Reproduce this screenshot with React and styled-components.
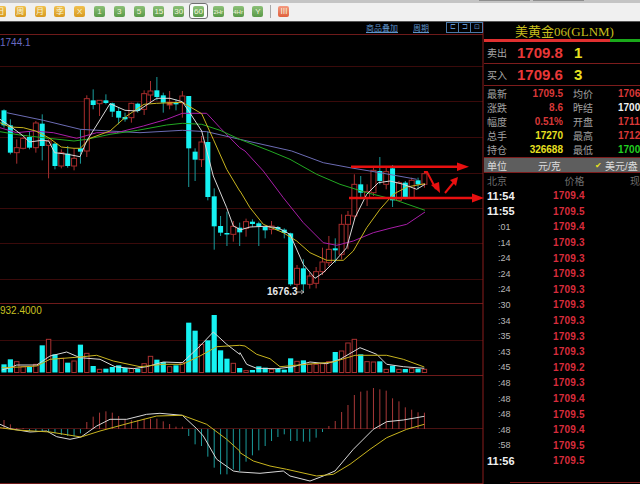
import React from "react";
import styled, { createGlobalStyle } from "styled-components";

const GlobalStyle = createGlobalStyle`
  html, body {
    margin: 0;
    padding: 0;
    background: #000;
    overflow: hidden;
  }
`;

const CN = `"Liberation Sans", "Noto Sans CJK SC", sans-serif`;

const Page = styled.div`
  width: 640px;
  height: 484px;
  display: flex;
  flex-direction: column;
  overflow: hidden;
  font-family: ${CN};
`;

const TopStrip = styled.div`
  height: 3px;
  background: #c4c4c4;
  display: flex;
  gap: 3px;
  padding-left: 479px;
`;

const StripTab = styled.div`
  width: 51px;
  height: 1px;
  background: #8e8e8e;
`;

const Toolbar = styled.div`
  height: 17px;
  background: #f0f0f0;
  border-bottom: 1px solid #555;
  display: flex;
  align-items: center;
  padding: 0 0 1px 0;
  margin-left: -5px;
  gap: 8.8px;
  isolation: isolate;
`;

const ToolIcon = styled.div`
  position: relative;
  width: 11px;
  height: 11px;
  border-radius: 2px;
  flex: none;
  display: flex;
  align-items: center;
  justify-content: center;
  font-size: ${(p) => (p.$small ? 6 : 8)}px;
  line-height: 1;
  white-space: nowrap;
  color: #f4f4d8;
  background: ${(p) =>
    p.$tone === "orange"
      ? "linear-gradient(#f0c050, #d89a20)"
      : p.$tone === "red"
      ? "linear-gradient(#f49a80, #e0603c)"
      : "linear-gradient(#8cc078, #5a9a48)"};
  ${(p) =>
    p.$active &&
    `&::before {
      content: "";
      position: absolute;
      inset: -3px -4px -2px -4px;
      background: #fbfbfb;
      border: 1px solid #707070;
      border-radius: 3px;
      z-index: -1;
    }`}
`;

const ToolSep = styled.div`
  width: 1px;
  height: 13px;
  background: #a8a8a8;
  flex: none;
  margin: 0 -1.5px 0 -2px;
`;

const Main = styled.div`
  flex: 1;
  display: flex;
  min-height: 0;
`;

const ChartPane = styled.div`
  position: relative;
  width: 484px;
  flex: none;
  background: #000;
`;

const ChartSvg = styled.svg`
  display: block;
`;

const ChartLinks = styled.div`
  position: absolute;
  top: 0;
  right: 1px;
  height: 11px;
  display: flex;
  align-items: center;
  font-size: 8px;
  color: #5f93c8;
`;

const ChartLink = styled.span`
  text-decoration: underline;
  margin-right: ${(p) => p.$gap}px;
`;

const PagerBox = styled.span`
  width: 11px;
  height: 9px;
  border: 1px solid #4a78a8;
  margin-left: -1px;
  font-size: 7px;
  line-height: 8px;
  text-align: center;
`;

const Side = styled.div`
  flex: 1;
  min-width: 0;
  background: #000;
  display: flex;
  flex-direction: column;
  overflow: hidden;
`;

const Title = styled.div`
  height: 17px;
  display: flex;
  align-items: center;
  padding-left: 31px;
  font-family: "Liberation Serif", "Noto Sans CJK SC", serif;
  font-size: 13px;
  color: #c6bd1e;
  white-space: nowrap;
`;

const Meter = styled.div`
  height: 3px;
  display: flex;
  background: #1aa81a;
`;

const MeterFill = styled.div`
  width: 126px;
  background: #e03030;
`;

const QuoteRow = styled.div`
  height: 21px;
  border-bottom: 1px solid #7c1c1c;
  display: flex;
  align-items: center;
  padding-left: 3px;
`;

const QuoteLabel = styled.span`
  width: 30px;
  font-size: 10px;
  color: #a8a8a8;
`;

const QuotePrice = styled.span`
  width: 57px;
  font-size: 15px;
  font-weight: 700;
  color: #e83838;
`;

const QuoteQty = styled.span`
  font-size: 15px;
  font-weight: 700;
  color: #e8e020;
`;

const Stats = styled.div`
  display: grid;
  grid-template-columns: 30px 46px 10px 45px 1fr;
  grid-auto-rows: 14.2px;
  padding-left: 3px;
  height: 71px;
  align-items: center;
  white-space: nowrap;
`;

const StatLabel = styled.span`
  font-size: 10px;
  color: #a0a0a0;
  grid-column: ${(p) => p.$col};
`;

const StatValue = styled.span`
  font-size: 10px;
  font-weight: 700;
  color: ${(p) => p.$color};
  text-align: ${(p) => p.$align || "right"};
`;

const UnitBar = styled.div`
  height: 14px;
  background: #5e5e5e;
  border-top: 1px solid #7c1c1c;
  border-bottom: 1px solid #7c1c1c;
  display: flex;
  align-items: center;
  padding-left: 3px;
  font-size: 10px;
  color: #dcdcdc;
  white-space: nowrap;
`;

const UnitName = styled.span`
  width: 51px;
`;

const UnitValue = styled.span`
  width: 57px;
`;

const UnitCheck = styled.span`
  width: 10px;
  font-size: 8px;
  color: #e8e020;
`;

const TradeHead = styled.div`
  height: 15px;
  display: flex;
  align-items: center;
  padding-left: 3px;
  font-size: 10px;
  color: #6e6e6e;
  white-space: nowrap;
`;

const TradeHeadCol = styled.span`
  width: ${(p) => p.$w}px;
`;

const TradeList = styled.div`
  display: flex;
  flex-direction: column;
`;

const TradeRow = styled.div`
  height: 15.6px;
  display: flex;
  align-items: center;
  padding-left: 3px;
`;

const TradeTime = styled.span`
  width: 66px;
  flex: none;
  white-space: nowrap;
  font-size: ${(p) => (p.$full ? 11 : 9)}px;
  font-weight: ${(p) => (p.$full ? 700 : 400)};
  color: ${(p) => (p.$full ? "#f0f0f0" : "#b8b8b8")};
  padding-left: ${(p) => (p.$full ? 0 : 11)}px;
  box-sizing: border-box;
`;

const TradePrice = styled.span`
  font-size: 10px;
  font-weight: 700;
  letter-spacing: 0.2px;
  color: #d82c3c;
`;

const SideFoot = styled.div`
  margin-top: auto;
  margin-left: 26px;
  margin-bottom: 1px;
  height: 1px;
  background: #7c1c1c;
`;

const toolItems = [
  ["日", "orange"], ["周", "orange"], ["月", "orange"], ["季", "orange"], ["X", "orange"],
  ["1", "green"], ["3", "green"], ["5", "green"], ["15", "green"], ["30", "green"],
  ["60", "green", true], ["2Hr", "green"], ["4Hr", "green"], ["Y", "green"],
];

const stats = [
  ["最新", "1709.5", "#d83838", "均价", "1706", "#d83838"],
  ["涨跌", "8.6", "#d83838", "昨结", "1700", "#f0f0f0"],
  ["幅度", "0.51%", "#d83838", "开盘", "1711", "#d83838"],
  ["总手", "17270", "#e8e020", "最高", "1712", "#d83838"],
  ["持仓", "326688", "#e8e020", "最低", "1700", "#20d020"],
];

const trades = [
  ["11:54", "1709.4"], ["11:55", "1709.5"], [":01", "1709.4"], [":14", "1709.3"],
  [":24", "1709.3"], [":24", "1709.3"], [":24", "1709.3"], [":30", "1709.3"],
  [":34", "1709.3"], [":35", "1709.3"], [":43", "1709.3"], [":45", "1709.2"],
  [":48", "1709.3"], [":48", "1709.4"], [":48", "1709.5"], [":48", "1709.4"],
  [":58", "1709.5"], ["11:56", "1709.5"],
];

// candle values were read off 3x crops, so keep them in crop units
const fromA = (y) => 60 + y / 3;
const fromB = (y) => 150 + y / 3;
const candleX = (i) => 4 + 6.37 * i;

// c = cyan (down), r = red (up): high, body top, body bottom, low
const candlesA = [
  ["c", 145, 148, 193, 200], ["c", 175, 193, 275, 280], ["r", 235, 260, 275, 308], ["r", 228, 232, 262, 265],
  ["c", 210, 228, 260, 265], ["r", 180, 186, 260, 275], ["c", 160, 188, 255, 298], ["r", 235, 240, 253, 352],
  ["c", 245, 248, 315, 325], ["r", 265, 275, 315, 322], ["c", 255, 278, 315, 320], ["r", 262, 292, 315, 328],
  ["c", 205, 262, 272, 308], ["r", 103, 113, 270, 288], ["c", 85, 118, 132, 145], ["r", 118, 118, 128, 165],
  ["c", 100, 118, 126, 130], ["c", 125, 127, 152, 168], ["c", 140, 150, 170, 190], ["c", 155, 168, 175, 182],
  ["r", 125, 127, 170, 185], ["c", 125, 128, 150, 155], ["r", 88, 98, 145, 162], ["r", 60, 90, 102, 125],
  ["c", 48, 88, 108, 118], ["c", 95, 103, 125, 155], ["o", 90, 124, 132, 145], ["c", 115, 125, 130, 148],
  ["r", 90, 105, 125, 170], ["c", 105, 105, 262, 378], ["c", 262, 272, 296, 360], ["r", 225, 243, 296, 318],
  ["c", 212, 243, 408, 418], ["c", 382, 406, 496, 566], ["c", 465, 495, 515, 525], ["c", 452, 516, 518, 555],
  ["r", 480, 496, 520, 542], ["c", 485, 500, 514, 555],
];
const candlesB = [
  ["r", 203, 212, 232, 257], ["c", 205, 212, 219, 228], ["c", 212, 217, 226, 285], ["c", 225, 228, 238, 262],
  ["r", 210, 225, 235, 250], ["c", 225, 228, 236, 240], ["c", 232, 236, 246, 262], ["c", 245, 247, 400, 405],
  ["r", 342, 352, 400, 410], ["c", 325, 352, 400, 420], ["r", 365, 375, 400, 413], ["r", 348, 362, 397, 412],
  ["r", 290, 333, 362, 372], ["r", 255, 295, 335, 345], ["c", 262, 292, 298, 335], ["r", 190, 220, 310, 325],
  ["r", 180, 193, 220, 295], ["r", 70, 100, 195, 205], ["c", 75, 100, 125, 140], ["r", 100, 122, 140, 165],
  ["r", 45, 58, 125, 135], ["c", 18, 60, 90, 100], ["r", 50, 62, 100, 115], ["c", 42, 52, 148, 168],
  ["r", 90, 95, 148, 150], ["c", 90, 95, 138, 145], ["r", 80, 88, 140, 142], ["c", 80, 88, 100, 115],
  ["r", 60, 68, 100, 110],
];
const candles = [
  ...candlesA.map(([k, a, b, c, d]) => [k, fromA(a), fromA(b), fromA(c), fromA(d)]),
  ...candlesB.map(([k, a, b, c, d]) => [k, fromB(a), fromB(b), fromB(c), fromB(d)]),
];

// volume bar tops, crop units (y = 295 + v / 3)
const volumes = [
  ["c", 205], ["c", 190], ["r", 197], ["r", 212], ["c", 213], ["r", 205], ["c", 148], ["r", 130], ["c", 175], ["r", 187],
  ["c", 200], ["r", 195], ["c", 146], ["r", 172], ["c", 210], ["r", 220], ["c", 218], ["c", 213], ["c", 208], ["c", 216],
  ["r", 217], ["c", 218], ["r", 203], ["r", 181], ["c", 191], ["c", 198], ["r", 212], ["c", 208], ["r", 200], ["c", 80],
  ["c", 104], ["r", 145], ["c", 133], ["c", 57], ["c", 163], ["c", 188], ["r", 202], ["c", 216], ["r", 224], ["c", 222],
  ["c", 211], ["c", 215], ["r", 220], ["c", 218], ["c", 221], ["c", 187], ["r", 196], ["c", 193], ["r", 205], ["r", 205],
  ["r", 203], ["r", 197], ["c", 168], ["r", 165], ["r", 141], ["r", 130], ["c", 175], ["r", 197], ["r", 198], ["c", 196],
  ["r", 220], ["c", 209], ["r", 220], ["c", 219], ["r", 218], ["c", 218], ["r", 220],
];

// macd histogram bar ends, crop units (same y mapping), zero at 398
const macd = [
  372, 385, 396, 396, 405, 405, 405, 408, 412, 417, 420, 422, 412, 378, 362, 350, 346, 350, 360, 370,
  372, 372, 368, 368, 368, 376, 384, 392, 392, 420, 445, 450, 482, 515, 535, 535, 520, 525, 497, 478,
  463, 450, 435, 423, 415, 435, 435, 437, 437, 425, 408, 390, 375, 348, 327, 297, 287, 284, 276, 280,
  284, 307, 316, 334, 341, 349, 350,
];

const toPoints = (left, right, topY) =>
  [
    ...left.map(([x, y]) => [x / 3, topY + y / 3]),
    ...right.map(([x, y]) => [240 + x / 3, topY + y / 3]),
  ]
    .map(([x, y]) => `${x.toFixed(1)},${y.toFixed(1)}`)
    .join(" ");

const mainToPoints = (left, right) =>
  [
    ...left.map(([x, y]) => [x / 3, fromA(y)]),
    ...right.map(([x, y]) => [240 + x / 3, fromB(y)]),
  ]
    .map(([x, y]) => `${x.toFixed(1)},${y.toFixed(1)}`)
    .join(" ");

const mainLines = [
  {
    color: "#6c6cb4",
    pts: mainToPoints(
      [[20, 155], [130, 178], [241, 205], [330, 210], [420, 215], [547, 208], [620, 212], [719, 235]],
      [[155, 0], [250, 35], [330, 50], [420, 65], [530, 85]]
    ),
  },
  {
    color: "#a81ea8",
    pts: mainToPoints(
      [[0, 200], [50, 215], [100, 210], [160, 215], [230, 232], [290, 215], [350, 215], [430, 195], [500, 175], [547, 157], [620, 157], [660, 200], [719, 260]],
      [[15, 0], [70, 60], [130, 140], [190, 215], [250, 275], [290, 283], [340, 270], [400, 245], [450, 232], [500, 220], [555, 183]]
    ),
  },
  {
    color: "#22a822",
    pts: mainToPoints(
      [[0, 212], [60, 222], [146, 232], [222, 240], [260, 235], [330, 220], [413, 208], [500, 192], [547, 187], [605, 190], [660, 208], [719, 235]],
      [[90, 0], [150, 25], [230, 70], [300, 100], [380, 125], [460, 145], [555, 178]]
    ),
  },
  {
    color: "#c8b41e",
    pts: mainToPoints(
      [[0, 185], [30, 198], [70, 200], [107, 210], [146, 230], [184, 258], [222, 262], [241, 262], [270, 232], [330, 210], [380, 165], [432, 130], [470, 127], [547, 124], [605, 158], [640, 235], [680, 325], [719, 390]],
      [[0, 120], [30, 170], [70, 220], [130, 245], [170, 270], [210, 305], [260, 328], [310, 328], [340, 300], [380, 230], [420, 175], [460, 130], [500, 108], [555, 98]]
    ),
  },
  {
    color: "#d8d8d8",
    pts: mainToPoints(
      [[0, 175], [30, 195], [70, 225], [88, 243], [126, 238], [146, 240], [164, 275], [203, 280], [240, 287], [260, 240], [298, 180], [330, 128], [375, 148], [413, 150], [450, 125], [470, 112], [510, 112], [547, 122], [566, 150], [605, 210], [640, 345], [680, 440], [700, 495], [719, 505]],
      [[0, 237], [30, 228], [75, 226], [113, 230], [150, 250], [190, 340], [225, 382], [250, 365], [285, 330], [320, 290], [345, 200], [380, 130], [415, 95], [450, 90], [490, 100], [530, 115], [555, 100]]
    ),
  },
];

const lowerLines = [
  {
    color: "#d8d8d8",
    pts: toPoints(
      [[5, 222], [30, 215], [50, 207], [110, 207], [150, 180], [200, 168], [240, 185], [300, 190], [345, 212], [400, 218], [440, 212], [490, 198], [547, 200], [600, 150], [640, 108], [680, 145], [719, 175]],
      [[0, 170], [20, 205], [50, 217], [110, 218], [160, 212], [210, 198], [260, 203], [300, 190], [360, 155], [410, 175], [440, 205], [490, 212], [553, 217]],
      295
    ),
  },
  {
    color: "#c8b41e",
    pts: toPoints(
      [[5, 215], [60, 213], [110, 210], [150, 190], [240, 183], [290, 178], [340, 195], [420, 212], [490, 205], [547, 205], [600, 180], [650, 152], [719, 148]],
      [[0, 148], [15, 150], [50, 175], [90, 188], [120, 212], [200, 205], [280, 198], [345, 178], [440, 178], [490, 190], [553, 213]],
      295
    ),
  },
  {
    color: "#d8d8d8",
    pts: toPoints(
      [[0, 385], [30, 398], [90, 408], [140, 405], [170, 422], [210, 430], [243, 423], [290, 390], [330, 370], [380, 370], [440, 355], [480, 352], [547, 358], [590, 398], [610, 420], [650, 490], [700, 525], [719, 528]],
      [[0, 528], [60, 532], [130, 525], [150, 540], [210, 555], [250, 540], [285, 525], [340, 460], [400, 400], [440, 377], [490, 372], [553, 361]],
      295
    ),
  },
  {
    color: "#c8b41e",
    pts: toPoints(
      [[0, 395], [50, 402], [150, 408], [243, 423], [300, 405], [400, 378], [470, 360], [547, 358], [620, 385], [680, 430], [719, 465]],
      [[0, 470], [40, 495], [90, 510], [140, 520], [230, 540], [280, 535], [330, 505], [390, 460], [440, 425], [500, 400], [553, 385]],
      295
    ),
  },
];

const dimGrid = [65, 100, 136, 172, 207, 242, 278, 339];
const brightGrid = [33, 302, 374, 482];

const Candle = ({ i, kind, high, top, bottom, low }) => {
  const x = candleX(i);
  const cyan = kind === "c";
  const wick = cyan ? "#1a9c9c" : "#a83030";
  const h = Math.max(bottom - top, 1.5);
  return (
    <g>
      <line x1={x} x2={x} y1={high} y2={low} stroke={wick} strokeWidth="1" />
      <rect
        x={x - 2.5}
        y={top}
        width="5"
        height={h}
        fill={cyan ? "#16f2f2" : kind === "o" ? "#e06020" : "#000"}
        stroke={cyan ? "none" : "#a82c2c"}
        strokeWidth="1"
      />
    </g>
  );
};

const PriceChart = () => (
  <ChartSvg width="484" height="463" viewBox="0 21 484 463">
    {dimGrid.map((y) => (
      <line key={y} x1="0" x2="483" y1={y + 0.5} y2={y + 0.5} stroke="#3a0a0a" />
    ))}
    {brightGrid.map((y) => (
      <line key={y} x1="0" x2="483" y1={y + 0.5} y2={y + 0.5} stroke="#6e1a1a" />
    ))}
    <line x1="0" x2="483" y1="427.5" y2="427.5" stroke="#4a1212" />
    <line x1="483" x2="483" y1="21" y2="484" stroke="#8a1c1c" />

    <text x="0" y="45" fontSize="10" fill="#6a6ac0" fontFamily="Liberation Sans">1744.1</text>
    <text x="0" y="313" fontSize="10" fill="#c8c020" fontFamily="Liberation Sans">932.4000</text>

    {candles.map(([kind, high, top, bottom, low], i) => (
      <Candle key={i} i={i} kind={kind} high={high} top={top} bottom={bottom} low={low} />
    ))}
    {mainLines.map((l) => (
      <polyline key={l.color} points={l.pts} fill="none" stroke={l.color} strokeWidth="1" />
    ))}

    <text x="267" y="294" fontSize="10" fontWeight="700" fill="#e8e8e8" fontFamily="Liberation Sans">1676.3</text>
    <path d="M296 291h8M301 289l3 2-3 2" fill="none" stroke="#c8c8c8" strokeWidth="0.8" />

    {volumes.map(([kind, v], i) => {
      const y = 295 + v / 3;
      const base = 371.5;
      return kind === "c" ? (
        <rect key={i} x={candleX(i) - 2.6} y={y} width="5.2" height={base - y} fill="#16f2f2" />
      ) : (
        <rect key={i} x={candleX(i) - 2.2} y={y} width="4.4" height={base - y} fill="#000" stroke="#a83030" />
      );
    })}

    {macd.map((v, i) => {
      const y = 295 + v / 3;
      const up = v < 398;
      return (
        <line key={i} x1={candleX(i)} x2={candleX(i)} y1="428" y2={y} stroke={up ? "#a83838" : "#1a9c9c"} strokeWidth="1" />
      );
    })}
    {lowerLines.map((l, i) => (
      <polyline key={i} points={l.pts} fill="none" stroke={l.color} strokeWidth="1" />
    ))}

    {/* hand-drawn arrows on top of the chart */}
    <g fill="#e81010" stroke="#e81010">
      <line x1="351" x2="458" y1="165.7" y2="165.7" strokeWidth="2.4" />
      <polygon points="457,161.5 469,165.7 457,170" stroke="none" />
      <line x1="349" x2="473" y1="197" y2="197" strokeWidth="2.4" />
      <polygon points="472,192.5 484,197 472,201.5" stroke="none" />
      <polyline points="424,171 427,171 436,188" fill="none" strokeWidth="2" />
      <polygon points="431,184 440,192 439,181" stroke="none" />
      <line x1="445" x2="454" y1="192" y2="181" strokeWidth="2" />
      <polygon points="450,179 458,176 456,185" stroke="none" />
    </g>
  </ChartSvg>
);

export default function App() {
  return (
    <Page>
      <GlobalStyle />
      <TopStrip>
        <StripTab />
        <StripTab />
      </TopStrip>
      <Toolbar>
        {toolItems.map(([label, tone, active]) => (
          <ToolIcon key={label} $tone={tone} $active={active} $small={label.length > 2}>
            {label}
          </ToolIcon>
        ))}
        <ToolSep />
        <ToolIcon $tone="red">Ⅲ</ToolIcon>
      </Toolbar>
      <Main>
        <ChartPane>
          <PriceChart />
          <ChartLinks>
            <ChartLink $gap={15}>商品叠加</ChartLink>
            <ChartLink $gap={18}>周期</ChartLink>
            <PagerBox>⊏</PagerBox>
            <PagerBox>⊐</PagerBox>
            <PagerBox>⊡</PagerBox>
          </ChartLinks>
        </ChartPane>
        <Side>
          <Title>美黄金06(GLNM)</Title>
          <Meter>
            <MeterFill />
          </Meter>
          <QuoteRow>
            <QuoteLabel>卖出</QuoteLabel>
            <QuotePrice>1709.8</QuotePrice>
            <QuoteQty>1</QuoteQty>
          </QuoteRow>
          <QuoteRow>
            <QuoteLabel>买入</QuoteLabel>
            <QuotePrice>1709.6</QuotePrice>
            <QuoteQty>3</QuoteQty>
          </QuoteRow>
          <Stats>
            {stats.map(([l1, v1, c1, l2, v2, c2]) => (
              <React.Fragment key={l1}>
                <StatLabel $col={1}>{l1}</StatLabel>
                <StatValue $color={c1}>{v1}</StatValue>
                <span />
                <StatLabel $col={4}>{l2}</StatLabel>
                <StatValue $color={c2} $align="left">{v2}</StatValue>
              </React.Fragment>
            ))}
          </Stats>
          <UnitBar>
            <UnitName>单位</UnitName>
            <UnitValue>元/克</UnitValue>
            <UnitCheck>✔</UnitCheck>
            美元/盎
          </UnitBar>
          <TradeHead>
            <TradeHeadCol $w={78}>北京</TradeHeadCol>
            <TradeHeadCol $w={66}>价格</TradeHeadCol>
            现
          </TradeHead>
          <TradeList>
            {trades.map(([time, price], i) => (
              <TradeRow key={i}>
                <TradeTime $full={time.length > 3}>{time}</TradeTime>
                <TradePrice>{price}</TradePrice>
              </TradeRow>
            ))}
          </TradeList>
          <SideFoot />
        </Side>
      </Main>
    </Page>
  );
}
